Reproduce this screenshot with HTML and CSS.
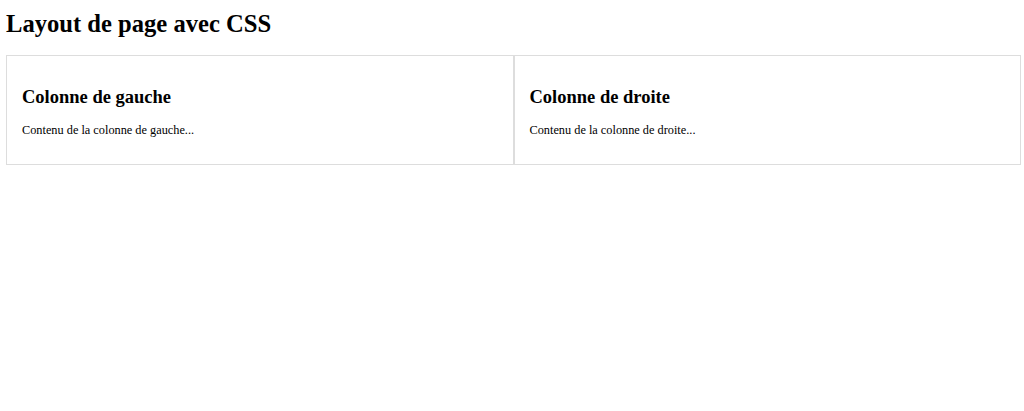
FILE: index.html
```html
<!DOCTYPE html>
<html lang="fr">
<head>
<meta charset="utf-8">
<title>Layout de page avec CSS</title>
<link rel="stylesheet" href="styles.css">
</head>
<body>
<h1 class="title">Layout de page avec CSS</h1>
<div class="row">
  <div class="col">
    <h2 class="col-title">Colonne de gauche</h2>
    <p class="col-text">Contenu de la colonne de gauche...</p>
  </div>
  <div class="col">
    <h2 class="col-title">Colonne de droite</h2>
    <p class="col-text">Contenu de la colonne de droite...</p>
  </div>
</div>
</body>
</html>
```
FILE: styles.css
```css
html, body {
  background: #fff;
}
body {
  margin: 0;
  padding: 6px 3px 6px 6px;
  font-family: "Liberation Serif", "Times New Roman", serif;
  color: #000;
}
.title {
  font-size: 24.6px;
  font-weight: bold;
  margin: 4px 0 16.5px;
}
.row {
  display: flex;
}
.col {
  flex: 1;
  border: 1px solid #dddddd;
  padding: 16px 15px 14px;
}
.col-title {
  font-size: 18.5px;
  font-weight: bold;
  margin: 15px 0;
}
.col-text {
  font-size: 12.3px;
  margin: 12px 0;
}
```
